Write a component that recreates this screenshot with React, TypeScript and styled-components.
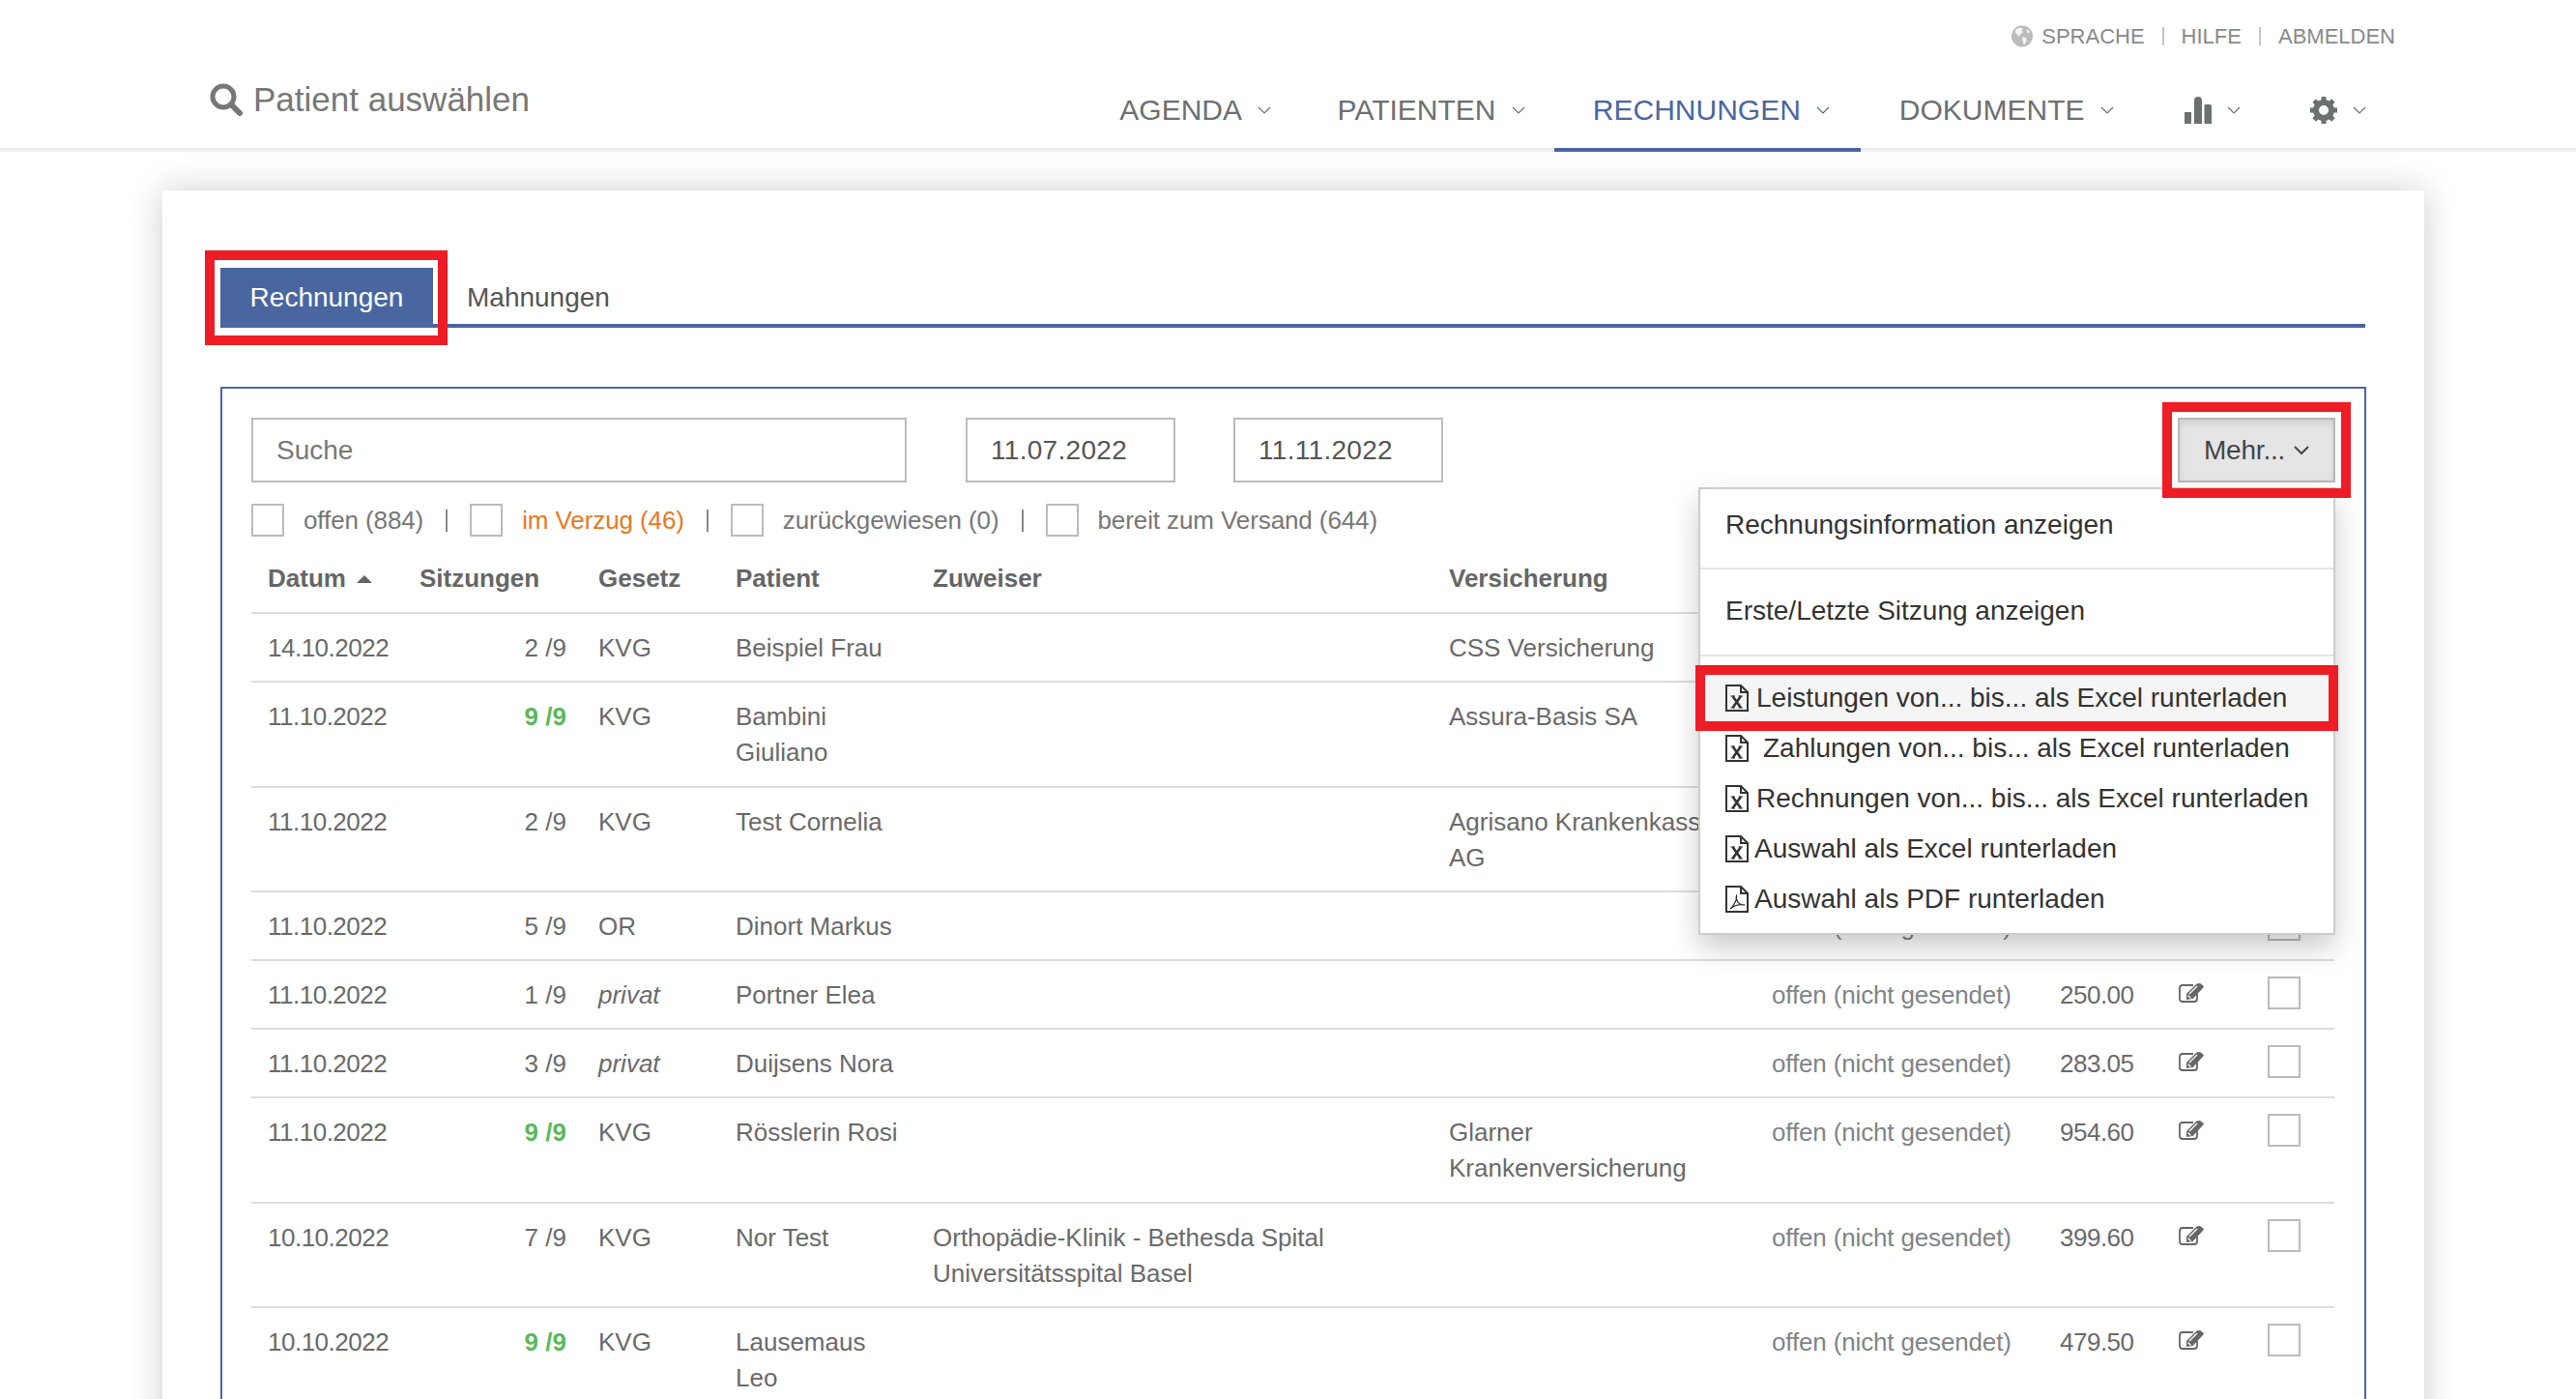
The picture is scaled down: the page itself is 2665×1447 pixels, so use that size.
import React from 'react'
import styled, { createGlobalStyle } from 'styled-components'

const GlobalStyle = createGlobalStyle`
  html, body {
    margin: 0;
    padding: 0;
    background: #fff;
    height: 100%;
    overflow: hidden;
  }
  body {
    font-family: "Liberation Sans", Arial, sans-serif;
    color: #666;
  }
  * {
    box-sizing: border-box;
  }
`

const BLUE = '#4a66a0'
const RED = '#ee1c25'

const Page = styled.div`
  height: 1447px;
  overflow: hidden;
`

//Header
const Header = styled.header`
  position: relative;
  z-index: 1;
  height: 157px;
  background: #fff;
  border-bottom: 4px solid #eee;
`
const TopLinks = styled.div`
  display: flex;
  justify-content: flex-end;
  align-items: center;
  height: 27px;
  padding: 24px 187px 0 0;
  box-sizing: content-box;
  font-size: 22px;
  color: #868a8c;
`
const TopLink = styled.span`
  display: flex;
  align-items: center;
  gap: 9px;
`
const TopSep = styled.span`
  width: 2px;
  height: 19px;
  margin: 0 18px;
  background: #c4c6c7;
`
const MainRow = styled.div`
  display: flex;
  justify-content: space-between;
  height: 102px;
  padding: 0 185px 0 217px;
`
const PatientSearch = styled.div`
  display: flex;
  align-items: center;
  gap: 11px;
  height: 103px;
  font-size: 35px;
  color: #777;
`
const Nav = styled.nav`
  display: flex;
  align-items: flex-start;
`
const NavItem = styled.div<{ $active?: boolean; $pr?: number }>`
  display: flex;
  align-items: center;
  height: 106px;
  padding: 24px ${(p) => p.$pr || 32}px 0 40px;
  font-size: 30px;
  color: ${(p) => (p.$active ? BLUE : '#6b7071')};
  border-bottom: 4px solid ${(p) => (p.$active ? BLUE : 'transparent')};
`
const NavChevron = styled.svg`
  width: 14px;
  height: 8px;
  margin-left: 16px;
  flex: none;
`

//Card
const Card = styled.main`
  width: 2340px;
  margin: 40px 0 0 168px;
  padding: 80px 60px 0 60px;
  height: 1400px;
  background: #fff;
  box-shadow: 0 0 34px rgba(0, 0, 0, 0.2);
`
const TabBar = styled.div`
  display: flex;
  height: 62px;
  margin-right: 1px;
  border-bottom: 4px solid ${BLUE};
`
const Tab = styled.div<{ $active?: boolean }>`
  position: relative;
  display: flex;
  align-items: center;
  justify-content: center;
  height: 62px;
  width: ${(p) => (p.$active ? '220px' : 'auto')};
  margin-left: ${(p) => (p.$active ? '0' : '35px')};
  font-size: 28px;
  color: ${(p) => (p.$active ? '#fff' : '#555')};
  background: ${(p) => (p.$active ? BLUE : 'transparent')};
`
const RedFrame = styled.span<{ $t: number; $r: number; $b: number; $l: number }>`
  position: absolute;
  z-index: 3;
  top: ${(p) => p.$t}px;
  right: ${(p) => p.$r}px;
  bottom: ${(p) => p.$b}px;
  left: ${(p) => p.$l}px;
  border: 10px solid ${RED};
  pointer-events: none;
`

//Filter box
const FilterBox = styled.section`
  position: relative;
  margin-top: 61px;
  padding: 30px;
  height: 1100px;
  border: 2px solid ${BLUE};
`
const FilterRow = styled.div`
  display: flex;
  align-items: center;
`
const TextInput = styled.input<{ $w: number; $gap?: number }>`
  width: ${(p) => p.$w}px;
  height: 67px;
  margin-left: ${(p) => p.$gap || 0}px;
  padding: 0 24px;
  font: 28px "Liberation Sans", Arial, sans-serif;
  color: #555;
  background: #fff;
  border: 2px solid #bbb;
  border-radius: 0;
  outline: none;
  &::placeholder {
    color: #777;
    opacity: 1;
  }
`
const DateInput = styled(TextInput)`
  letter-spacing: 0.3px;
`
const MoreWrap = styled.div`
  position: relative;
  margin-left: auto;
`
const MoreButton = styled.button`
  display: flex;
  align-items: center;
  width: 163px;
  height: 67px;
  padding: 0 0 0 25px;
  font: 28px "Liberation Sans", Arial, sans-serif;
  letter-spacing: -0.2px;
  color: #444;
  background: #e5e5e5;
  border: 2px solid #b8b8b8;
  box-shadow: inset 0 4px 6px rgba(0, 0, 0, 0.1);
`
const MoreChevron = styled.svg`
  width: 16px;
  height: 10px;
  margin-left: 9px;
`
const CheckRow = styled.div`
  display: flex;
  align-items: center;
  margin-top: 22px;
  font-size: 26px;
  color: #777;
`
const Box = styled.span`
  display: block;
  flex: none;
  width: 34px;
  height: 34px;
  background: #fff;
  border: 2px solid #bbb;
`
const CheckLabel = styled.span<{ $warn?: boolean }>`
  margin-left: 20px;
  letter-spacing: -0.1px;
  color: ${(p) => (p.$warn ? '#e8791f' : '#777')};
`
const CheckSep = styled.span`
  width: 2px;
  height: 23px;
  margin: 0 23px;
  background: #888;
`

//Table
const Table = styled.table`
  width: 2155px;
  margin-top: 9px;
  table-layout: fixed;
  border-collapse: separate;
  border-spacing: 0;
  font-size: 26px;
  line-height: 37.14px;
  color: #6a6a6a;
`
const Th = styled.th`
  padding: 16px 16px 16px 17px;
  text-align: left;
  font-weight: 700;
  color: #666;
  white-space: nowrap;
  border-bottom: 2px solid #ddd;
`
const SortArrow = styled.span`
  display: inline-block;
  margin: 0 0 4px 11px;
  border-left: 8px solid transparent;
  border-right: 8px solid transparent;
  border-bottom: 8px solid #666;
`
const Td = styled.td<{ $align?: string; $muted?: boolean; $italic?: boolean }>`
  padding: 17px 16px 15px 17px;
  vertical-align: top;
  text-align: ${(p) => p.$align || 'left'};
  color: ${(p) => (p.$muted ? '#808587' : 'inherit')};
  font-style: ${(p) => (p.$italic ? 'italic' : 'normal')};
  letter-spacing: ${(p) => (p.$muted ? '-0.15px' : 'normal')};
  border-bottom: 2px solid #ddd;
`
const DateCell = styled(Td)`
  letter-spacing: -0.5px;
`
const AmountCell = styled(Td)`
  padding-right: 20px;
  text-align: right;
  letter-spacing: -0.5px;
`
const IconCell = styled(Td)`
  padding-left: 30px;
  svg {
    display: block;
    margin-top: 6px;
  }
`
const BoxCell = styled(Td)`
  padding: 16px 0 16px 16px;
`
const Sessions = styled.span<{ $full?: boolean }>`
  color: ${(p) => (p.$full ? '#5cb85c' : 'inherit')};
  font-weight: ${(p) => (p.$full ? 700 : 400)};
`

//Dropdown
const Menu = styled.div`
  position: absolute;
  z-index: 2;
  top: 102px;
  right: 30px;
  width: 659px;
  height: 463px;
  background: #fff;
  border: 2px solid #ccc;
  box-shadow: 0 14px 28px rgba(0, 0, 0, 0.2);
  font-size: 28px;
  line-height: 40px;
  color: #333;
`
const MenuLink = styled.div<{ $top: number; $bottom: number }>`
  padding: ${(p) => p.$top}px 26px ${(p) => p.$bottom}px;
  border-bottom: 2px solid #e5e5e5;
`
const MenuList = styled.div`
  padding-top: 17px;
`
const MenuItem = styled.div<{ $active?: boolean }>`
  position: relative;
  display: flex;
  align-items: center;
  height: 52px;
  padding-left: 26px;
  background: ${(p) => (p.$active ? '#f5f5f5' : 'transparent')};
`
const MenuText = styled.span<{ $gap: number }>`
  margin-left: ${(p) => p.$gap}px;
  white-space: nowrap;
`

//Icons
const SearchIcon = () => (
  <svg width="34" height="34" viewBox="0 0 34 34" fill="none" stroke="#777">
    <circle cx="14" cy="14" r="11" strokeWidth="5" />
    <path d="M22 22 L31 31" strokeWidth="6" strokeLinecap="round" />
  </svg>
)

const GlobeIcon = () => (
  <svg width="22" height="23" viewBox="0 0 22 23">
    <circle cx="11" cy="11.5" r="11" fill="#bcbcbc" />
    <path
      d="M5 4 L9 2.5 L12 3.5 L10.5 6 L12 7 L9.5 9 L8 12 L5.5 9.5 L3.5 7 Z M11 12 L15 13 L16 15.5 L13.5 20 L12 19.5 L11.5 15.5 Z M15.5 4 L18.5 6 L18 8.5 L16 7.5 Z"
      fill="#f3f3f3"
    />
  </svg>
)

const BarsIcon = () => (
  <svg width="28" height="28" viewBox="0 0 28 28" fill="#6b7071">
    <rect x="0" y="16" width="7" height="12" />
    <path d="M10 28 V4 Q10 0 14 0 Q18 0 18 4 V28 Z" />
    <path d="M20.500 28 V9 Q20.500 8 22 8 H26 Q28 8 28 10 V28 Z" />
  </svg>
)

const CogIcon = () => (
  <svg width="28" height="28" viewBox="0 0 28 28" fill="#6b7071">
    {[0, 45, 90, 135, 180, 225, 270, 315].map((deg) => (
      <rect key={deg} x="11.500" y="0" width="5" height="6" transform={`rotate(${deg} 14 14)`} />
    ))}
    <circle cx="14" cy="14" r="8" fill="none" stroke="#6b7071" strokeWidth="6" />
  </svg>
)

const Chevron = ({ color }: { color?: string }) => (
  <NavChevron viewBox="0 0 14 8" fill="none" stroke={color || '#6b7071'} strokeWidth="1.2">
    <path d="M1 1 L7 7 L13 1" />
  </NavChevron>
)

const EditIcon = () => (
  <svg width="26" height="20" viewBox="0 0 26 20" fill="none">
    <path
      d="M19 10.500 V16 Q19 19 16 19 H4 Q1 19 1 16 V5 Q1 2 4 2 H15"
      stroke="#666"
      strokeWidth="1.800"
    />
    <path d="M8 11 L18.500 0.500 L22 0 L26 3 L25 5 L14.500 16 L8 17 Z" fill="#666" />
    <path d="M9.500 12.500 L12.500 15.500 M11 11 L19 3" stroke="#fff" strokeWidth="1.300" />
  </svg>
)

const FileShell = ({ children }: { children: React.ReactNode }) => (
  <svg width="24" height="28" viewBox="0 0 24 28" fill="none" style={{ flex: 'none' }}>
    <path d="M1 1 H16 L23 8 V27 H1 Z M16 1 V8 H23" stroke="#333" strokeWidth="2" />
    {children}
  </svg>
)

const ExcelIcon = () => (
  <FileShell>
    <path d="M7.500 12 L16 24 M16 12 L7.500 24" stroke="#333" strokeWidth="2.600" />
    <path d="M5.500 12 H10 M13.500 12 H18 M5.500 24 H10 M13.500 24 H18" stroke="#333" strokeWidth="1.200" />
  </FileShell>
)

const PdfIcon = () => (
  <FileShell>
    <path
      d="M5 24 Q8 22 11 15 Q12 12 11.500 10.500 Q10.500 13 13 17 Q15 20 20 20 Q15 19 10 21 Q6 23 5 24 Z"
      stroke="#333"
      strokeWidth="1.300"
    />
  </FileShell>
)

type Row = {
  date: string
  done: number
  law: string
  patient: string
  referrer?: string
  insurer?: string
  amount: string
}

const rows: Row[] = [
  { date: '14.10.2022', done: 2, law: 'KVG', patient: 'Beispiel Frau', insurer: 'CSS Versicherung', amount: '212.40' },
  { date: '11.10.2022', done: 9, law: 'KVG', patient: 'Bambini Giuliano', insurer: 'Assura-Basis SA', amount: '671.55' },
  { date: '11.10.2022', done: 2, law: 'KVG', patient: 'Test Cornelia', insurer: 'Agrisano Krankenkasse AG', amount: '198.20' },
  { date: '11.10.2022', done: 5, law: 'OR', patient: 'Dinort Markus', amount: '234.75' },
  { date: '11.10.2022', done: 1, law: 'privat', patient: 'Portner Elea', amount: '250.00' },
  { date: '11.10.2022', done: 3, law: 'privat', patient: 'Duijsens Nora', amount: '283.05' },
  { date: '11.10.2022', done: 9, law: 'KVG', patient: 'Rösslerin Rosi', insurer: 'Glarner Krankenversicherung', amount: '954.60' },
  {
    date: '10.10.2022',
    done: 7,
    law: 'KVG',
    patient: 'Nor Test',
    referrer: 'Orthopädie-Klinik - Bethesda Spital Universitätsspital Basel',
    amount: '399.60',
  },
  { date: '10.10.2022', done: 9, law: 'KVG', patient: 'Lausemaus Leo', amount: '479.50' },
]

const columns = [157, 185, 142, 204, 534, 334, 298, 110, 106, 85]

const filters = [
  { label: 'offen (884)' },
  { label: 'im Verzug (46)', warn: true },
  { label: 'zurückgewiesen (0)' },
  { label: 'bereit zum Versand (644)' },
]

export default function App() {
  return (
    <Page>
      <GlobalStyle />
      <Header>
        <TopLinks>
          <TopLink>
            <GlobeIcon />
            SPRACHE
          </TopLink>
          <TopSep />
          <TopLink>HILFE</TopLink>
          <TopSep />
          <TopLink>ABMELDEN</TopLink>
        </TopLinks>
        <MainRow>
          <PatientSearch>
            <SearchIcon />
            Patient auswählen
          </PatientSearch>
          <Nav>
            <NavItem $pr={28.6}>
              AGENDA
              <Chevron />
            </NavItem>
            <NavItem $pr={30.3}>
              PATIENTEN
              <Chevron />
            </NavItem>
            <NavItem $active>
              RECHNUNGEN
              <Chevron color={BLUE} />
            </NavItem>
            <NavItem $pr={33.5}>
              DOKUMENTE
              <Chevron />
            </NavItem>
            <NavItem>
              <BarsIcon />
              <Chevron />
            </NavItem>
            <NavItem>
              <CogIcon />
              <Chevron />
            </NavItem>
          </Nav>
        </MainRow>
      </Header>

      <Card>
        <TabBar>
          <Tab $active>
            Rechnungen
            <RedFrame $t={-18} $r={-15} $b={-18} $l={-16} />
          </Tab>
          <Tab>Mahnungen</Tab>
        </TabBar>

        <FilterBox>
          <FilterRow>
            <TextInput $w={678} placeholder="Suche" readOnly />
            <DateInput $w={217} $gap={61} defaultValue="11.07.2022" readOnly />
            <DateInput $w={217} $gap={60} defaultValue="11.11.2022" readOnly />
            <MoreWrap>
              <MoreButton>
                Mehr...
                <MoreChevron viewBox="0 0 16 10" fill="none" stroke="#444" strokeWidth="2">
                  <path d="M1 1 L8 8 L15 1" />
                </MoreChevron>
              </MoreButton>
              <RedFrame $t={-16} $r={-16} $b={-16} $l={-16} />
            </MoreWrap>
          </FilterRow>

          <CheckRow>
            {filters.map((f, i) => (
              <React.Fragment key={f.label}>
                {i > 0 && <CheckSep />}
                <Box />
                <CheckLabel $warn={f.warn}>{f.label}</CheckLabel>
              </React.Fragment>
            ))}
          </CheckRow>

          <Menu>
            <MenuLink $top={17} $bottom={24}>
              Rechnungsinformation anzeigen
            </MenuLink>
            <MenuLink $top={23} $bottom={25}>
              Erste/Letzte Sitzung anzeigen
            </MenuLink>
            <MenuList>
              <MenuItem $active>
                <ExcelIcon />
                <MenuText $gap={8}>Leistungen von... bis... als Excel runterladen</MenuText>
                <RedFrame $t={-8} $r={-5} $b={-8} $l={-5} />
              </MenuItem>
              <MenuItem>
                <ExcelIcon />
                <MenuText $gap={15}>Zahlungen von... bis... als Excel runterladen</MenuText>
              </MenuItem>
              <MenuItem>
                <ExcelIcon />
                <MenuText $gap={8}>Rechnungen von... bis... als Excel runterladen</MenuText>
              </MenuItem>
              <MenuItem>
                <ExcelIcon />
                <MenuText $gap={6}>Auswahl als Excel runterladen</MenuText>
              </MenuItem>
              <MenuItem>
                <PdfIcon />
                <MenuText $gap={6}>Auswahl als PDF runterladen</MenuText>
              </MenuItem>
            </MenuList>
          </Menu>

          <Table>
            <colgroup>
              {columns.map((w, i) => (
                <col key={i} width={w} />
              ))}
            </colgroup>
            <thead>
              <tr>
                <Th>
                  Datum
                  <SortArrow />
                </Th>
                <Th>Sitzungen</Th>
                <Th>Gesetz</Th>
                <Th>Patient</Th>
                <Th>Zuweiser</Th>
                <Th>Versicherung</Th>
                <Th />
                <Th />
                <Th />
                <Th />
              </tr>
            </thead>
            <tbody>
              {rows.map((r) => (
                <tr key={r.patient}>
                  <DateCell>{r.date}</DateCell>
                  <Td $align="right">
                    <Sessions $full={r.done === 9}>{r.done} /9</Sessions>
                  </Td>
                  <Td $italic={r.law === 'privat'}>{r.law}</Td>
                  <Td>{r.patient}</Td>
                  <Td>{r.referrer}</Td>
                  <Td>{r.insurer}</Td>
                  <Td $muted>offen (nicht gesendet)</Td>
                  <AmountCell>{r.amount}</AmountCell>
                  <IconCell>
                    <EditIcon />
                  </IconCell>
                  <BoxCell>
                    <Box />
                  </BoxCell>
                </tr>
              ))}
            </tbody>
          </Table>
        </FilterBox>
      </Card>
    </Page>
  )
}
